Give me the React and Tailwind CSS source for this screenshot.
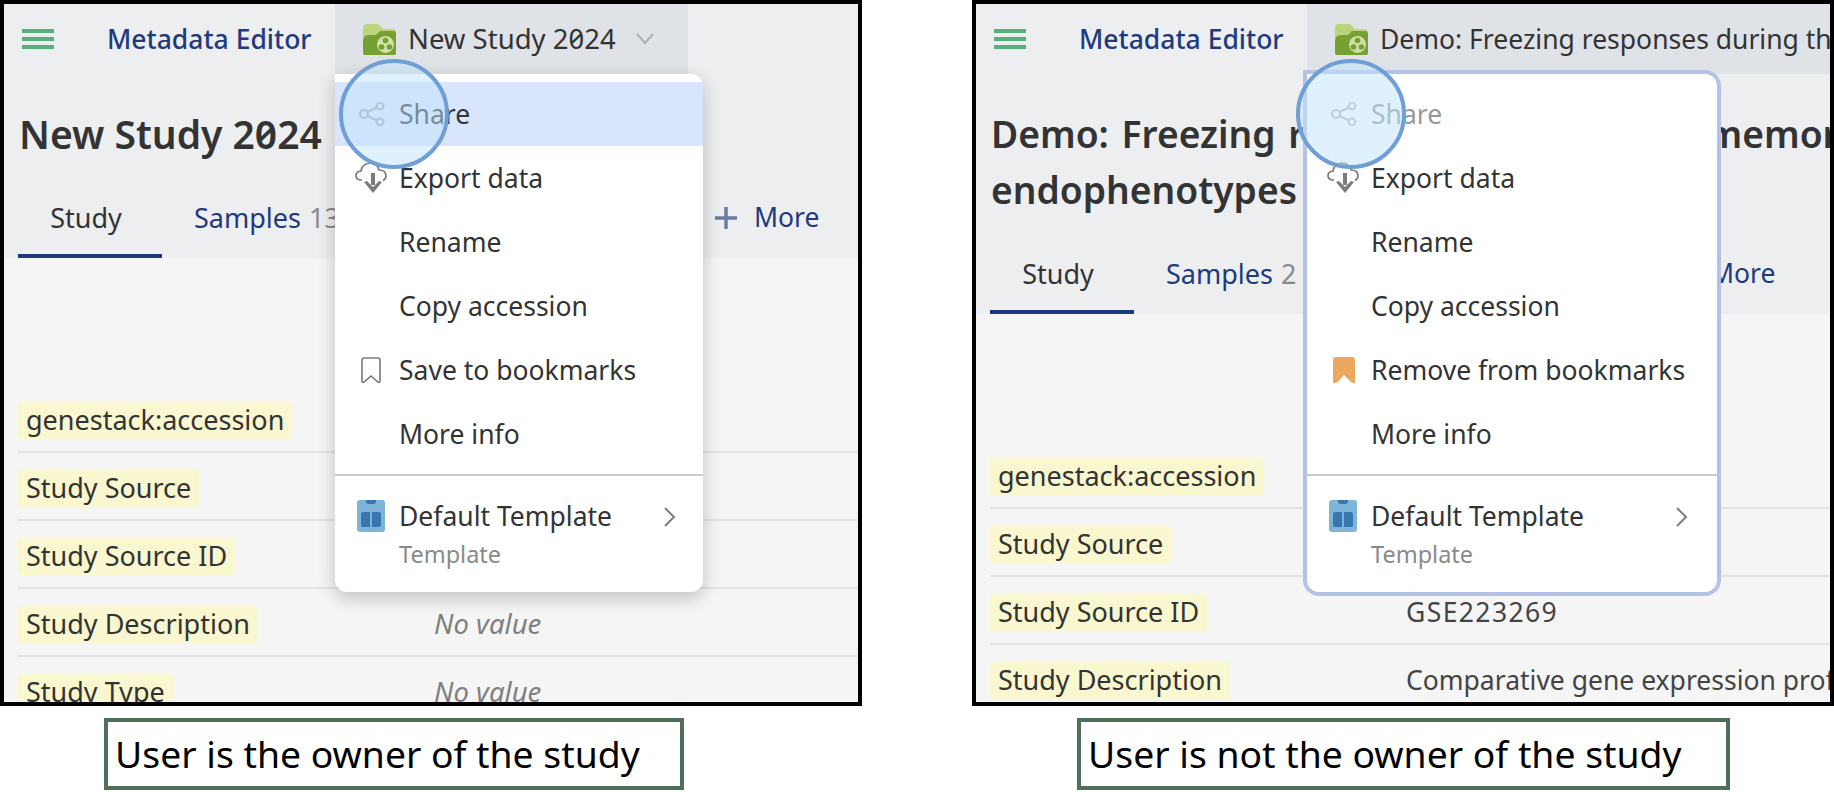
const FONT = "font-['Noto_Sans',sans-serif]";

function Hamburger() {
  return (
    <div className="flex w-8 flex-col gap-1">
      <span className="h-1 bg-[#5AAE7E]" />
      <span className="h-1 bg-[#5AAE7E]" />
      <span className="h-1 bg-[#5AAE7E]" />
    </div>
  );
}

function FolderIcon() {
  return (
    <svg width="33" height="31" viewBox="0 0 33 31" className="shrink-0">
      <path d="M0 4q0-4 4-4h11l5 5h9q4 0 4 4v6H0z" fill="#BBD67A" />
      <path d="M0 17q0-6 6-6h7l4-4h13q3 0 3 3v19q0 2-2 2H2q-2 0-2-2z" fill="#76A032" />
      <circle cx="22.500" cy="20.500" r="8.500" fill="#CFE0A8" />
      <circle cx="22.500" cy="16.500" r="2.800" fill="#76A032" />
      <circle cx="18.500" cy="23" r="2.800" fill="#76A032" />
      <circle cx="26.500" cy="23" r="2.800" fill="#76A032" />
    </svg>
  );
}

function ShareIcon({ light }) {
  return (
    <svg width="26" height="24" viewBox="0 0 26 24" fill="none" stroke={light ? '#B5BDC2' : '#A0A8AC'} strokeWidth="2">
      <circle cx="5" cy="12" r="4" />
      <circle cx="21" cy="4" r="3.4" />
      <circle cx="21" cy="20" r="3.4" />
      <path d="M8.500 10 18 5.500M8.500 14 18 18.500" />
    </svg>
  );
}

function CloudIcon() {
  return (
    <svg width="32" height="32" viewBox="0 0 32 32" fill="none">
      <path d="M7 18H5q-4-1-4-4.500 0-4 5-4.500 1-7 9-8 7 0 9 7 7 0 7 6 0 3-3 4.500" stroke="#7B7B7B" strokeWidth="1.700" />
      <path d="M18 11v12" stroke="#7B7B7B" strokeWidth="4" />
      <path d="M9 20 18 31 27 20l-3-1-6 6-6-6z" fill="#7B7B7B" />
    </svg>
  );
}

function BookmarkIcon({ filled }) {
  if (filled) {
    return (
      <svg width="22" height="27" viewBox="0 0 22 27">
        <path d="M3 0h16q3 0 3 3v22q0 2-2 1l-2-1-7-7-6 7-3 1q-2 1-2-1V3q0-3 3-3z" fill="#EBA95F" />
      </svg>
    );
  }
  return (
    <svg width="20" height="27" viewBox="0 0 20 27" fill="none">
      <path d="M3 1h14q2 0 2 2v21q0 2-2 1l-7-6-7 6q-2 1-2-1V3q0-2 2-2z" stroke="#7A7A7A" strokeWidth="1.600" />
    </svg>
  );
}

function TemplateIcon() {
  return (
    <svg width="28" height="32" viewBox="0 0 28 32" className="shrink-0">
      <rect width="28" height="32" rx="3" fill="#7DB4D8" />
      <path d="M9 0h10v1q0 3-3 3h-4q-3 0-3-3z" fill="#3877AE" />
      <path d="M4 14q0-2 2-2h7v15H6q-2 0-2-2z" fill="#3877AE" />
      <path d="M15 12h7q2 0 2 2v11q0 2-2 2h-7z" fill="#3877AE" />
    </svg>
  );
}

function Chevron({ down }) {
  return (
    <svg width="18" height="20" viewBox="0 0 18 20" fill="none" stroke="#7F7F7F" strokeWidth="2">
      {down ? <path d="M1 5l8 9 8-9" stroke="#ABAFB3" /> : <path d="M4 1l9 9-9 9" />}
    </svg>
  );
}

function Menu({ owner }) {
  const rowText = 'text-[26.500px] text-[#333333] leading-none whitespace-nowrap';
  return (
    <div
      className={
        owner
          ? 'absolute left-[331px] top-[70px] z-10 h-[518px] w-[368px] rounded-b-xl rounded-tr-xl bg-white pt-2 shadow-[0_6px_18px_rgba(0,0,0,0.22)]'
          : 'absolute left-[327px] top-[66px] z-10 h-[526px] w-[418px] rounded-b-2xl rounded-tr-2xl border-4 border-[#B3C2E6] bg-white pt-2'
      }
    >
      <div className={owner ? 'flex h-16 items-center bg-[#D9E5FC] pl-6' : 'flex h-16 items-center pl-6'}>
        <span className="flex w-10 shrink-0"><ShareIcon light={!owner} /></span>
        <span className={owner ? 'text-[26.500px] leading-none text-[#333333]' : 'text-[26.500px] leading-none text-[#999999]'}>Share</span>
      </div>
      <div className="flex h-16 items-center pl-5">
        <span className="flex w-11 shrink-0"><CloudIcon /></span>
        <span className={rowText}>Export data</span>
      </div>
      <div className="flex h-16 items-center pl-[64px]"><span className={rowText}>Rename</span></div>
      <div className="flex h-16 items-center pl-[64px]"><span className={rowText}>Copy accession</span></div>
      <div className="flex h-16 items-center pl-[26px]">
        <span className="flex w-[38px] shrink-0"><BookmarkIcon filled={!owner} /></span>
        <span className={rowText}>{owner ? 'Save to bookmarks' : 'Remove from bookmarks'}</span>
      </div>
      <div className="flex h-16 items-center pl-[64px]"><span className={rowText}>More info</span></div>
      <div className="mt-2 h-0.5 bg-[#C9C9CF]" />
      <div className="flex items-start pt-[24px] pl-[22px]">
        <TemplateIcon />
        <div className="ml-[14px] flex-1">
          <div className={'flex h-[32px] items-center ' + rowText}>Default Template</div>
          <div className="mt-[6px] text-[23.500px] leading-[32px] text-[#8A8A8A]">Template</div>
        </div>
        <span className={owner ? 'mt-[7px] mr-[24px] flex' : 'mt-[7px] mr-[26px] flex'}><Chevron /></span>
      </div>
    </div>
  );
}

function Row({ label, value }) {
  return (
    <div className="flex h-[68px] shrink-0 items-start border-b-2 border-[#E2E2E2] pt-[17px]">
      <div className="w-[416px] shrink-0">
        <span className="inline-block h-[37px] rounded-[3px] bg-[#F8F7CF] px-2 text-[27px] leading-[36px] whitespace-nowrap text-[#333333]">{label}</span>
      </div>
      {value ? (
        <span className="text-[26.500px] leading-[36px] whitespace-nowrap text-[#444444]">{value}</span>
      ) : (
        <span className="text-[27.500px] leading-[36px] whitespace-nowrap text-[#808080] italic">No value</span>
      )}
    </div>
  );
}

function Panel({ owner }) {
  const rows = owner
    ? [['genestack:accession', ' '], ['Study Source', ' '], ['Study Source ID', ' '], ['Study Description'], ['Study Type']]
    : [
        ['genestack:accession', ' '],
        ['Study Source', ' '],
        ['Study Source ID', <span className="tracking-[1.400px]">GSE223269</span>],
        ['Study Description', 'Comparative gene expression profiling of the amygdala'],
      ];

  return (
    <div className={(owner ? '' : 'ml-[110px] ') + 'relative flex h-[706px] w-[862px] flex-col overflow-hidden border-4 border-black bg-[#F5F5F5]'}>
      {/* header and tabs sit on the darker strip */}
      <div className="flex shrink-0 flex-col bg-[#ECEEF0]">
        <div className="flex h-[70px] items-center">
          <div className="ml-[18px] w-[85px]"><Hamburger /></div>
          <span className="w-[228px] text-[26.500px] leading-none font-medium whitespace-nowrap text-[#1F3A7D]">Metadata Editor</span>
          <div className={(owner ? 'w-[353px] ' : 'flex-1 ') + 'flex h-full items-center overflow-hidden bg-[#DFE2E7] pl-7'}>
            <FolderIcon />
            <span className={(owner ? 'text-[27.500px] ' : 'text-[26.500px] ') + 'ml-3 leading-none whitespace-nowrap text-[#333333] slashed-zero'}>
              {owner ? 'New Study 2024' : 'Demo: Freezing responses during that memory'}
            </span>
            {owner && <span className="ml-5 flex"><Chevron down /></span>}
          </div>
        </div>

        <div className={(owner ? 'text-[39px] ' : 'text-[37.200px] [word-spacing:3px] ') + 'px-[15px] pt-[32px] leading-[56px] font-semibold whitespace-nowrap text-[#333333] slashed-zero'}>
          {owner ? <div>New Study 2024</div> : (
            <>
              <div>Demo: Freezing responses during that memory</div>
              <div>endophenotypes</div>
            </>
          )}
        </div>

        <div className="mt-[16px] flex h-[80px] items-stretch pl-3.5 text-[27px] whitespace-nowrap">
          <div className="flex w-[144px] items-center justify-center border-b-4 border-[#1F3A7D] pt-1 pr-2 text-[#333333]">Study</div>
          <div className={(owner ? 'w-[520px] ' : 'w-[504px] ') + 'ml-[32px] flex items-center text-[#1F3A7D]'}>
            Samples<span className="ml-2 text-[#8A8A8A]">{owner ? '13' : '2'}</span>
          </div>
          <div className="flex items-center text-[26.500px] text-[#1F3A7D]">
            <svg width="24" height="24" viewBox="0 0 24 24" className="mr-[16px]" fill="none" stroke="#6A7BA6" strokeWidth="3.500">
              <path d="M12 1v22M1 12h22" />
            </svg>
            More
          </div>
        </div>
      </div>

      <div className="flex flex-1 flex-col overflow-hidden pt-[127px] pl-3.5">
        {rows.map(([label, value]) => <Row key={label} label={label} value={value} />)}
      </div>

      <Menu owner={owner} />

      {/* highlight ring over the Share item */}
      <div className={(owner ? 'left-[335px] ' : 'left-[320px] ') + 'absolute top-[55px] z-20 h-[110px] w-[110px] rounded-full border-4 border-[#6F9FD4] bg-[#BFE3FB]/50'} />
    </div>
  );
}

function Caption({ className, children }) {
  return (
    <div className={'flex h-[72px] items-center border-4 border-[#4F6F5B] bg-white pl-[7px] text-[37.300px] leading-none whitespace-nowrap text-black ' + className}>
      {children}
    </div>
  );
}

export default function App() {
  return (
    <div className={FONT + ' h-[792px] w-[1834px] overflow-hidden bg-white'}>
      <div className="flex">
        <Panel owner />
        <Panel />
      </div>
      <div className="mt-3 flex">
        <Caption className="ml-[104px] w-[580px]">User is the owner of the study</Caption>
        <Caption className="ml-[393px] w-[653px]">User is not the owner of the study</Caption>
      </div>
    </div>
  );
}
